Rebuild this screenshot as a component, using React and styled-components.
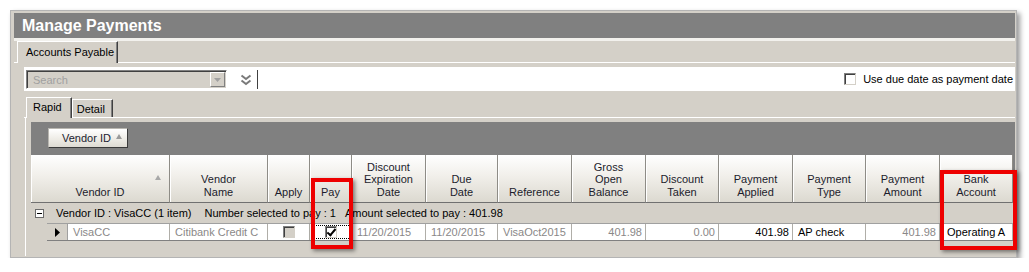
import styled, { createGlobalStyle } from "styled-components";

const GlobalStyle = createGlobalStyle`
  * { box-sizing: border-box; }
  body {
    margin: 0;
    background: #ffffff;
    font-family: "Liberation Sans", Arial, sans-serif;
    font-size: 11px;
    color: #000;
  }
`;

const COLS = "139px 98px 42px 42px 74px 72px 74px 74px 73px 74px 73px 74px 73px";

const headers = [
  { label: "Vendor ID", sort: true },
  { label: "Vendor\nName" },
  { label: "Apply" },
  { label: "Pay" },
  { label: "Discount\nExpiration\nDate" },
  { label: "Due\nDate" },
  { label: "Reference" },
  { label: "Gross\nOpen\nBalance" },
  { label: "Discount\nTaken" },
  { label: "Payment\nApplied" },
  { label: "Payment\nType" },
  { label: "Payment\nAmount" },
  { label: "Bank\nAccount" },
];

const row = [
  { text: "VisaCC", width: 102 },
  { text: "Citibank Credit C" },
  { check: "disabled" },
  { check: "checked", focus: true },
  { text: "11/20/2015" },
  { text: "11/20/2015" },
  { text: "VisaOct2015" },
  { text: "401.98", right: true },
  { text: "0.00", right: true },
  { text: "401.98", right: true, dark: true },
  { text: "AP check", dark: true },
  { text: "401.98", right: true },
  { text: "Operating A", dark: true, pad: 7 },
];

const App = () => {
  return (
    <>
      <GlobalStyle />
      <Window>
        <TitleBar>Manage Payments</TitleBar>
        <OuterTabs>
          <OuterTab>Accounts Payable</OuterTab>
        </OuterTabs>
        <OuterPage>
          <Toolbar>
            <Combo>
              <ComboText>Search</ComboText>
              <ComboButton>
                <svg width="7" height="4" viewBox="0 0 7 4">
                  <path d="M0 0 L7 0 L3.5 4 Z" fill="#a0a0a0" />
                </svg>
              </ComboButton>
            </Combo>
            <ExpandButton>
              <svg width="12" height="12" viewBox="0 0 12 12">
                <path
                  d="M1.5 1.5 L6 5 L10.5 1.5 M1.5 6.5 L6 10 L10.5 6.5"
                  stroke="#7a7a7a"
                  strokeWidth="2"
                  fill="none"
                />
              </svg>
            </ExpandButton>
            <DueDate>
              <Box />
              <span>Use due date as payment date</span>
            </DueDate>
          </Toolbar>
          <InnerTabs>
            <InnerTab $active>Rapid</InnerTab>
            <InnerTab>Detail</InnerTab>
          </InnerTabs>
          <InnerPage>
            <GroupPanel>
              <GroupChip>
                Vendor ID
                <SortGlyph />
              </GroupChip>
            </GroupPanel>
            <HeaderRow>
              {headers.map((h) => (
                <HeadCell key={h.label}>
                  {h.sort && <HeadSort />}
                  {h.label}
                </HeadCell>
              ))}
            </HeaderRow>
            <GroupRow>
              <Expander />
              <GroupText>Vendor ID : VisaCC (1 item)</GroupText>
              <GroupText $gap={13}>Number selected to pay : 1</GroupText>
              <GroupText $gap={9}>Amount selected to pay : 401.98</GroupText>
            </GroupRow>
            <DataRow>
              <RowHeader>
                <svg width="5" height="9" viewBox="0 0 5 9">
                  <path d="M0 0 L5 4.5 L0 9 Z" fill="#000" />
                </svg>
              </RowHeader>
              {row.map((c, i) => (
                <Cell
                  key={i}
                  $right={c.right}
                  $dark={c.dark}
                  $pad={c.pad}
                  $center={!!c.check}
                  $focus={c.focus}
                >
                  {c.check ? <Box $state={c.check} /> : c.text}
                </Cell>
              ))}
            </DataRow>
          </InnerPage>
        </OuterPage>
        <Highlight style={{ left: 300, top: 167, width: 42, height: 71 }} />
        <Highlight style={{ left: 929, top: 159, width: 77, height: 80 }} />
      </Window>
    </>
  );
};

const Window = styled.div`
  position: relative;
  width: 1007px;
  height: 248px;
  margin: 10px 0 0 10px;
  padding: 2px 1px 1px 3px;
  background: #d4d0c8;
  border: 1px solid #b4b4b4;
  box-shadow: 3px 3px 5px rgba(0, 0, 0, 0.4);
  display: flex;
  flex-direction: column;
`;

const TitleBar = styled.div`
  height: 28px;
  flex: none;
  background: #808080;
  border-bottom: 3px solid #f2f1ed;
  color: #fff;
  font-weight: bold;
  font-size: 16px;
  line-height: 25px;
  padding-left: 8px;
`;

const OuterTabs = styled.div`
  height: 22px;
  flex: none;
  display: flex;
  align-items: flex-end;
  padding-left: 3px;
  border-bottom: 1px solid #fff;
`;

const OuterTab = styled.div`
  width: 101px;
  height: 22px;
  margin-bottom: -1px;
  background: #d4d0c8;
  border-top: 1px solid #fff;
  border-left: 1px solid #fff;
  border-right: 1px solid #404040;
  box-shadow: inset -1px 0 0 #808080;
  padding: 3px 0 0 8px;
  line-height: 14px;
`;

const OuterPage = styled.div`
  flex: 1;
  min-height: 0;
  overflow: hidden;
  padding: 4px 0 0 10px;
  display: flex;
  flex-direction: column;
`;

const Toolbar = styled.div`
  height: 24px;
  flex: none;
  background: #fff;
  display: flex;
  align-items: flex-start;
  padding: 3px 0 0 2px;
`;

const Combo = styled.div`
  width: 201px;
  height: 19px;
  background: #d4d0c8;
  border-top: 1px solid #808080;
  border-left: 1px solid #808080;
  border-bottom: 1px solid #fff;
  border-right: 1px solid #fff;
  box-shadow: inset 1px 1px 0 #404040;
  display: flex;
  align-items: center;
  padding: 0 1px 0 6px;
`;

const ComboText = styled.span`
  flex: 1;
  color: #a0a0a0;
`;

const ComboButton = styled.div`
  width: 15px;
  height: 15px;
  background: #d4d0c8;
  border-top: 1px solid #fff;
  border-left: 1px solid #fff;
  border-right: 1px solid #808080;
  border-bottom: 1px solid #808080;
  display: flex;
  align-items: center;
  justify-content: center;
`;

const ExpandButton = styled.div`
  width: 24px;
  height: 19px;
  margin-left: 7px;
  background: #fff;
  border-right: 1px solid #404040;
  display: flex;
  align-items: center;
  justify-content: center;
`;

const DueDate = styled.label`
  margin-left: auto;
  display: flex;
  align-items: center;
  gap: 7px;
  height: 17px;
  padding-right: 2px;
  white-space: nowrap;
`;

const Box = styled.span`
  display: inline-block;
  position: relative;
  width: 12px;
  height: 12px;
  border: 1px solid #808080;
  border-right-color: #d4d0c8;
  border-bottom-color: #d4d0c8;
  background: ${(p) => (p.$state === "disabled" ? "#d4d0c8" : "#fff")};
  box-shadow: inset 1px 1px 0 #404040;
  &::after {
    content: "";
    display: ${(p) => (p.$state === "checked" ? "block" : "none")};
    position: absolute;
    left: 3px;
    top: 0px;
    width: 3px;
    height: 7px;
    border: solid #000;
    border-width: 0 2px 2px 0;
    transform: rotate(40deg);
  }
`;

const InnerTabs = styled.div`
  height: 27px;
  flex: none;
  display: flex;
  align-items: flex-end;
  padding-left: 2px;
  border-bottom: 1px solid #fff;
`;

const InnerTab = styled.div`
  height: ${(p) => (p.$active ? "21px" : "18px")};
  margin-bottom: ${(p) => (p.$active ? "-1px" : "0")};
  padding: ${(p) => (p.$active ? "3px 9px 0 6px" : "3px 7px 0 4px")};
  background: #d4d0c8;
  border-top: 1px solid #fff;
  border-left: 1px solid #fff;
  border-right: 1px solid #404040;
  box-shadow: inset -1px 0 0 #808080;
  line-height: 13px;
`;

const InnerPage = styled.div`
  flex: 1;
  margin-left: 1px;
  border-left: 1px solid #fff;
  padding: 4px 0 0 5px;
  display: flex;
  flex-direction: column;
`;

const GroupPanel = styled.div`
  height: 33px;
  flex: none;
  background: #808080;
  padding: 6px 0 0 17px;
`;

const GroupChip = styled.div`
  width: 80px;
  height: 20px;
  background: linear-gradient(#ffffff, #eeece6 55%, #dedbd3);
  border: 1px solid #b8b6b0;
  border-right-color: #3a3a3a;
  border-bottom-color: #3a3a3a;
  color: #1c1c30;
  display: flex;
  align-items: center;
  padding-left: 13px;
  gap: 5px;
`;

const SortGlyph = styled.span`
  width: 0;
  height: 0;
  border-left: 3px solid transparent;
  border-right: 3px solid transparent;
  border-bottom: 5px solid #9a9a9a;
  margin-top: -3px;
`;

const HeaderRow = styled.div`
  height: 48px;
  flex: none;
  display: grid;
  grid-template-columns: ${COLS};
  background: #808080;
`;

const HeadCell = styled.div`
  position: relative;
  display: flex;
  flex-direction: column;
  justify-content: flex-end;
  align-items: center;
  text-align: center;
  white-space: pre-line;
  line-height: 12.5px;
  padding-bottom: 4px;
  color: #1c1c2c;
  background: linear-gradient(#ffffff, #f1efea 45%, #dcd9d0);
  border-right: 1px solid #8e8c86;
  border-bottom: 1px solid #707070;
  box-shadow: inset 1px 0 0 #fff;
`;

const HeadSort = styled.span`
  position: absolute;
  right: 8px;
  top: 20px;
  width: 0;
  height: 0;
  border-left: 3px solid transparent;
  border-right: 3px solid transparent;
  border-bottom: 5px solid #a8a8a8;
`;

const GroupRow = styled.div`
  height: 20px;
  flex: none;
  display: flex;
  align-items: center;
  padding-left: 4px;
  background: #d4d0c8;
`;

const Expander = styled.span`
  position: relative;
  width: 9px;
  height: 9px;
  border: 1px solid #6a6a6a;
  background: #fff;
  margin-right: 12px;
  &::after {
    content: "";
    position: absolute;
    left: 1px;
    right: 1px;
    top: 3px;
    height: 1px;
    background: #000;
  }
`;

const GroupText = styled.span`
  margin-left: ${(p) => p.$gap || 0}px;
  white-space: nowrap;
`;

const DataRow = styled.div`
  height: 18px;
  flex: none;
  display: grid;
  grid-template-columns: 21px 102px 98px 42px 42px 74px 72px 74px 74px 73px 74px 73px 74px 73px;
  margin-left: 16px;
  border-top: 1px solid #a0a0a0;
  border-bottom: 1px solid #808080;
`;

const RowHeader = styled.div`
  background: #d4d0c8;
  border-right: 1px solid #a0a0a0;
  display: flex;
  align-items: center;
  justify-content: center;
  padding-left: 1px;
`;

const Cell = styled.div`
  background: #fff;
  border-right: 1px solid #b0aea8;
  display: flex;
  align-items: center;
  justify-content: ${(p) => (p.$center ? "center" : p.$right ? "flex-end" : "flex-start")};
  padding: ${(p) => (p.$right ? "0 3px 0 0" : p.$center ? "0" : `0 0 0 ${p.$pad || 5}px`)};
  color: ${(p) => (p.$dark ? "#000" : "#8a8888")};
  white-space: nowrap;
  overflow: hidden;
  outline: ${(p) => (p.$focus ? "1px dotted #000" : "none")};
  outline-offset: -2px;
`;

const Highlight = styled.div`
  position: absolute;
  border: 4px solid #ee0000;
  box-shadow: 2px 2px 4px rgba(0, 0, 0, 0.45);
  pointer-events: none;
`;

export default App;
